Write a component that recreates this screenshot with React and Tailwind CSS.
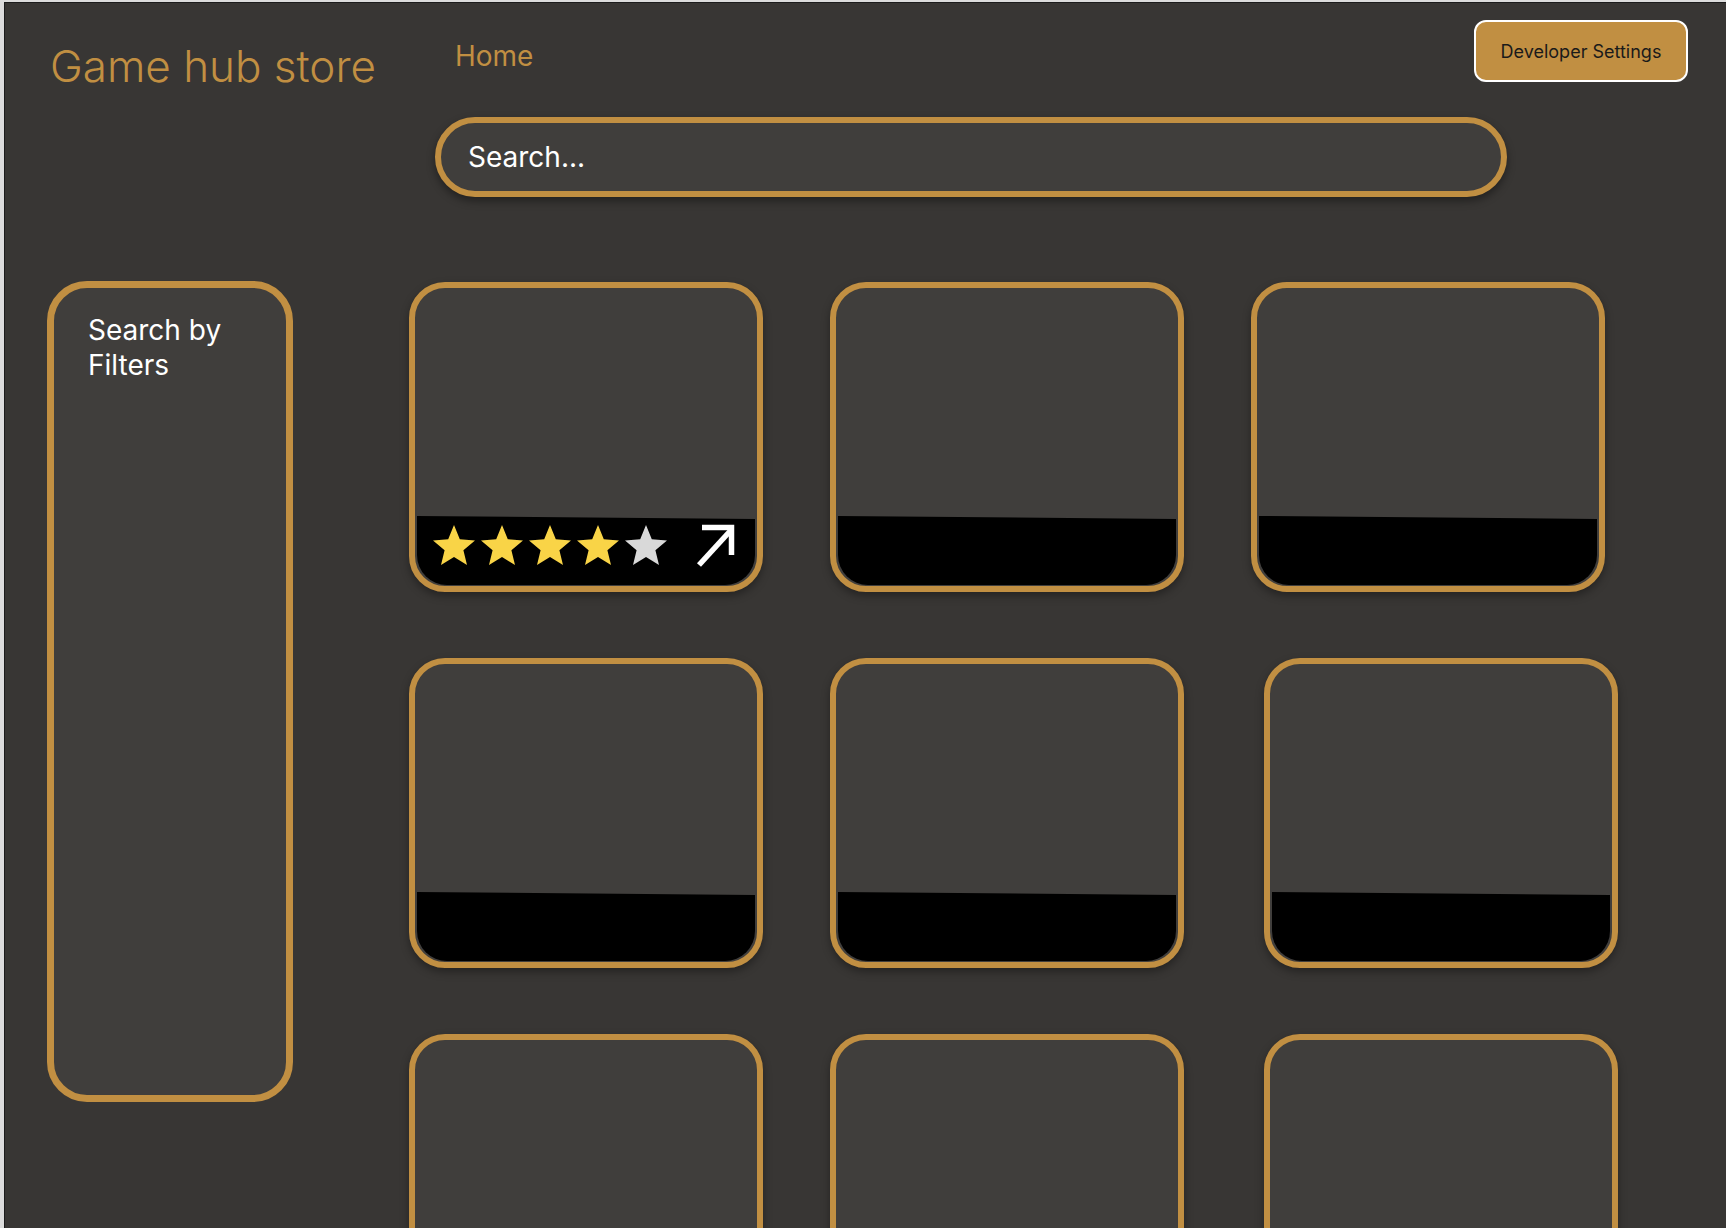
import { useState } from "react";

const font = { fontFamily: "Inter, 'Noto Sans', sans-serif" };

function Star({ filled }) {
  return (
    <svg width="48" height="48" viewBox="0 0 24 24" className="shrink-0">
      <polygon
        points="12,1.5 14.9,8.6 22.5,9.2 16.7,14.1 18.5,21.5 12,17.5 5.5,21.5 7.3,14.1 1.5,9.2 9.1,8.6"
        fill={filled ? "#f9d447" : "#d9d9d9"}
      />
    </svg>
  );
}

function GameCard({ rating, shift }) {
  return (
    <div
      className={`flex h-[310px] w-[354px] flex-col justify-end rounded-[36px] border-[6px] border-[#c18f42] bg-[#403e3c] px-[2px] pb-[1px] shadow-[0_4px_8px_rgba(0,0,0,0.35)] ${
        shift ? "ml-[13px]" : ""
      }`}
    >
      <div className="flex h-[69px] items-start rounded-b-[30px] bg-black pl-[13px] pt-[6px] [clip-path:polygon(0_0,100%_3px,100%_100%,0_100%)]">
        {rating != null && (
          <>
            <div className="flex">
              {[1, 2, 3, 4, 5].map((n) => (
                <Star key={n} filled={n <= rating} />
              ))}
            </div>
            <svg width="44" height="44" viewBox="0 0 44 44" className="ml-[24px] mt-[1px]">
              <path d="M5 42 L38 6" stroke="white" strokeWidth="5.5" fill="none" />
              <path d="M8 4.5 H37.5 V32" stroke="white" strokeWidth="5.5" fill="none" />
            </svg>
          </>
        )}
      </div>
    </div>
  );
}

export default function App() {
  const [query, setQuery] = useState("");

  return (
    <div className="h-[1228px] w-full overflow-hidden border-l-4 border-t-2 border-[#dcdcdc]" style={font}>
      <div className="h-full border-l border-t border-[#1c1c1c] bg-[#383634]">
        {/* Header */}
        <header className="flex h-[79px] items-start justify-between pl-[45px] pr-[38px] pt-[17px]">
          <div className="flex items-start">
            <h1 className="mt-[24px] text-[44px] font-light leading-none text-[#c18f42]">Game hub store</h1>
            <a href="#" className="ml-[79px] mt-[22px] text-[28px] leading-none text-[#c18f42]">
              Home
            </a>
          </div>
          <button className="h-[62px] w-[214px] shrink-0 rounded-[12px] border-2 border-white bg-[#c18f42] text-[18px] text-[#1a1a1a]">
            Developer Settings
          </button>
        </header>

        {/* Search */}
        <div className="ml-[430px] mt-[35px] flex h-[80px] w-[1072px] items-center rounded-full border-[6px] border-[#c18f42] bg-[#403e3c] pl-[27px] shadow-[0_4px_8px_rgba(0,0,0,0.4)]">
          <input
            value={query}
            onChange={(e) => setQuery(e.target.value)}
            placeholder="Search..."
            className="w-full bg-transparent text-[28px] text-white placeholder-white outline-none"
          />
        </div>

        {/* Body */}
        <div className="ml-[42px] mt-[84px] flex items-start">
          <aside className="h-[821px] w-[246px] shrink-0 rounded-[40px] border-[7px] border-[#c18f42] bg-[#403e3c] pl-[34px] pt-[25px]">
            <p className="text-[28px] leading-[35px] text-white">
              Search by
              <br />
              Filters
            </p>
          </aside>

          <div className="ml-[116px] mt-[1px] grid grid-cols-[354px_354px_354px] gap-x-[67px] gap-y-[66px]">
            <GameCard rating={4} />
            <GameCard />
            <GameCard />
            <GameCard />
            <GameCard />
            <GameCard shift />
            <GameCard />
            <GameCard />
            <GameCard shift />
          </div>
        </div>
      </div>
    </div>
  );
}
